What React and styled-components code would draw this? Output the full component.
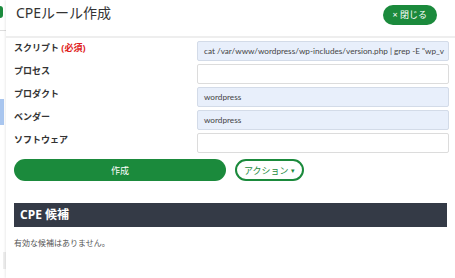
import React from 'react';
import styled, {createGlobalStyle} from 'styled-components';

const GlobalStyle = createGlobalStyle`
  html, body {
    margin: 0;
    padding: 0;
    background: #fff;
  }
  body {
    font-family: "Noto Sans", "Noto Sans CJK JP", sans-serif;
    color: #333;
  }
`;

const green = '#1b8a3c';

const fields = [
  {label: 'スクリプト', required: true, value: 'cat /var/www/wordpress/wp-includes/version.php | grep -E "wp_v', filled: true},
  {label: 'プロセス', value: ''},
  {label: 'プロダクト', value: 'wordpress', filled: true},
  {label: 'ベンダー', value: 'wordpress', filled: true},
  {label: 'ソフトウェア', value: ''},
];

export default function App() {
  return (
    <Page>
      <GlobalStyle />
      <BackStrip>
        <BackDot />
        <BackLine />
        <BackBlock />
        <BackGrey />
      </BackStrip>
      <Modal>
        <Header>
          <Title>CPEルール作成</Title>
          <CloseButton>× 閉じる</CloseButton>
        </Header>
        <Body>
          <Form>
            {fields.map(({label, required, value, filled}) => (
              <Row key={label}>
                <Label>
                  {label}
                  {required && <Required> (必須)</Required>}
                </Label>
                <Input $filled={filled}>{value}</Input>
              </Row>
            ))}
          </Form>
          <Actions>
            <CreateButton>作成</CreateButton>
            <ActionButton>アクション<Caret>▾</Caret></ActionButton>
          </Actions>
          <SectionBar>CPE 候補</SectionBar>
          <Empty>有効な候補はありません。</Empty>
        </Body>
      </Modal>
    </Page>
  );
}

const Page = styled.div`
  display: flex;
  width: 455px;
  height: 278px;
  overflow: hidden;
`;

const BackStrip = styled.div`
  width: 6px;
  flex-shrink: 0;
  display: flex;
  flex-direction: column;
  background: #fff;
`;

const BackDot = styled.div`
  width: 3px;
  height: 12px;
  margin-top: 6px;
  background: ${green};
  border-radius: 0 6px 6px 0;
`;

const BackLine = styled.div`
  height: 1px;
  margin-top: 12px;
  background: #ddd;
`;

const BackBlock = styled.div`
  width: 4px;
  height: 26px;
  margin-top: 68px;
  background: #a9c6ef;
`;

const BackGrey = styled.div`
  width: 3px;
  height: 17px;
  margin: 127px 0 0 3px;
  background: #eee;
`;

const Modal = styled.div`
  flex: 1;
  min-width: 0;
  display: flex;
  flex-direction: column;
  background: #fff;
  box-shadow: -1px 0 2px rgba(0, 0, 0, 0.08);
`;

const Header = styled.div`
  display: flex;
  align-items: flex-start;
  justify-content: space-between;
  height: 36px;
  padding: 0 18px 0 10px;
  border-bottom: 2px solid #eeeeee;
`;

const Title = styled.h1`
  margin: 4px 0 0;
  font-size: 14px;
  font-weight: 400;
  line-height: 18px;
  color: #333;
`;

const CloseButton = styled.button`
  margin-top: 5px;
  height: 20px;
  padding: 0 10px;
  border: none;
  border-radius: 10px;
  background: ${green};
  color: #fff;
  font-family: inherit;
  font-size: 9px;
  line-height: 20px;
`;

const Body = styled.div`
  display: flex;
  flex-direction: column;
  padding: 3px 6px 0 8px;
`;

const Form = styled.div`
  display: flex;
  flex-direction: column;
  gap: 3px;
`;

const Row = styled.div`
  display: grid;
  grid-template-columns: 183px 1fr;
  align-items: start;
`;

const Label = styled.div`
  font-size: 9px;
  font-weight: 700;
  line-height: 12px;
  color: #333;
  padding-top: 1px;
`;

const Required = styled.span`
  color: #e02020;
`;

const Input = styled.div`
  height: 18px;
  padding: 0 6px;
  border: 1px solid ${p => (p.$filled ? '#d3dbe8' : '#dcdcdc')};
  border-radius: 2px;
  background: ${p => (p.$filled ? '#e8effb' : '#fff')};
  font-family: Lato, "Noto Sans", sans-serif;
  font-size: 8.2px;
  line-height: 18px;
  color: #444;
  white-space: nowrap;
  overflow: hidden;
`;

const Actions = styled.div`
  display: flex;
  align-items: center;
  gap: 9px;
  margin-top: 6px;
`;

const CreateButton = styled.button`
  width: 212px;
  height: 22px;
  border: none;
  border-radius: 11px;
  background: ${green};
  color: #fff;
  font-family: inherit;
  font-size: 9px;
`;

const ActionButton = styled.button`
  display: flex;
  align-items: center;
  height: 22px;
  padding: 0 7px;
  border: 2px solid ${green};
  border-radius: 11px;
  background: #fff;
  color: ${green};
  font-family: inherit;
  font-size: 9px;
`;

const Caret = styled.span`
  font-size: 7px;
  margin-left: 2px;
`;

const SectionBar = styled.div`
  margin-top: 22px;
  margin-right: 2px;
  height: 24px;
  padding-left: 6px;
  background: #343a46;
  color: #fff;
  font-size: 12px;
  font-weight: 700;
  line-height: 24px;
`;

const Empty = styled.div`
  margin-top: 10px;
  font-size: 8px;
  line-height: 12px;
  color: #555;
`;
